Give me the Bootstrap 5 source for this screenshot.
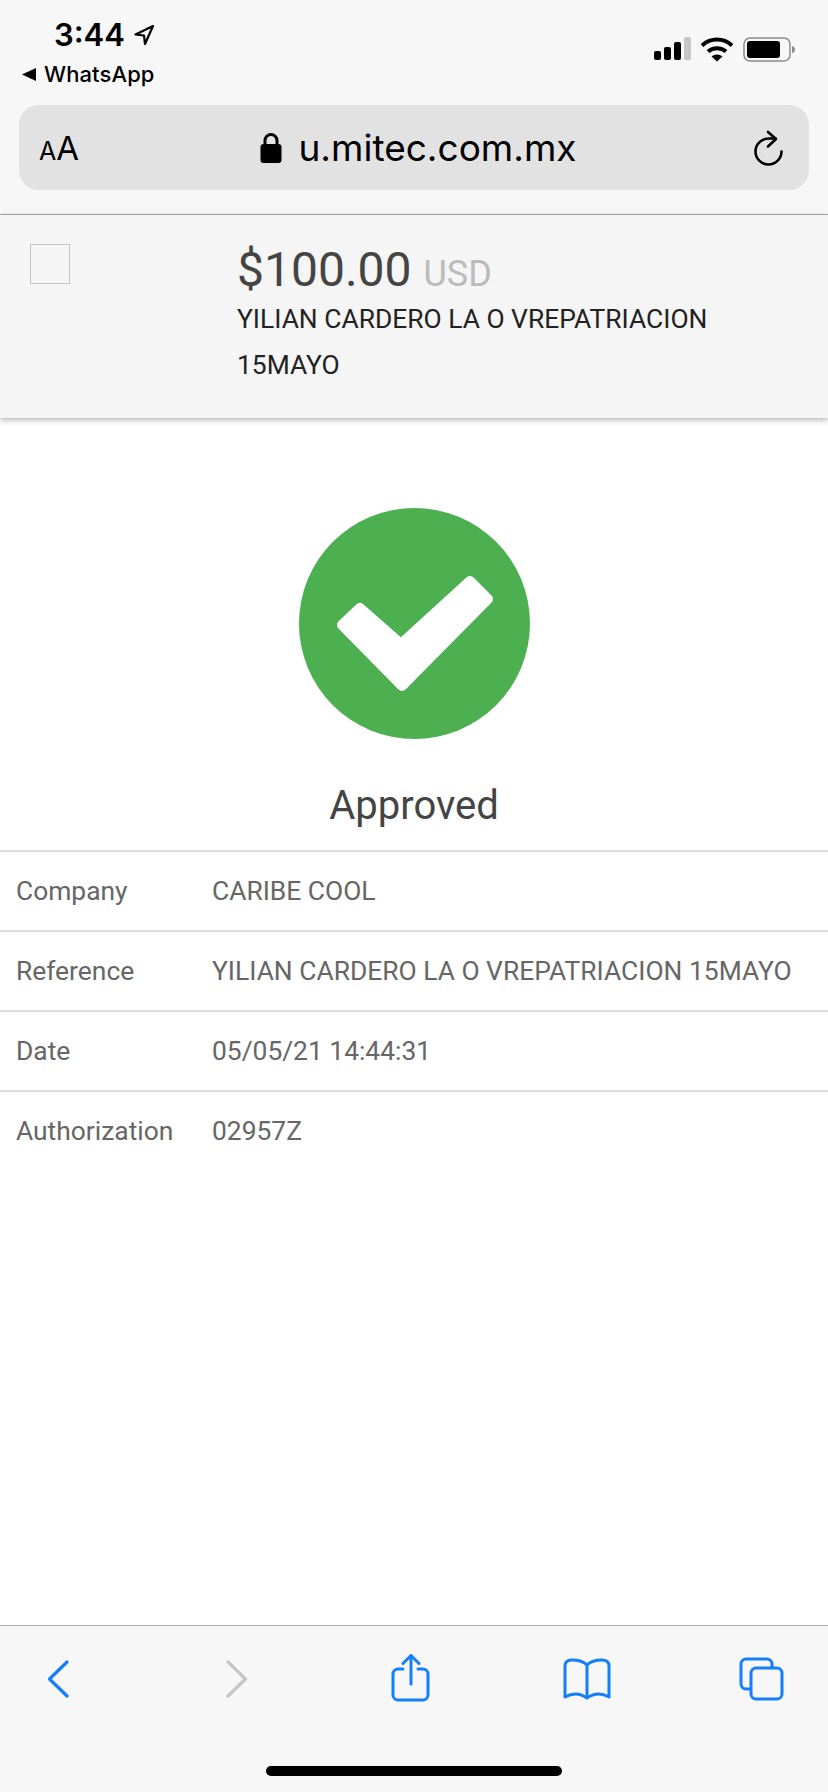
<!DOCTYPE html>
<html lang="en">
<head>
    <meta charset="UTF-8">
    <meta name="viewport" content="width=device-width, initial-scale=1.0">
    <title>Approved</title>
    <link href="https://cdn.jsdelivr.net/npm/bootstrap@5.3.0/dist/css/bootstrap.min.css" rel="stylesheet">
    <style>
        body {
            background: #fff;
            font-family: Roboto, "Liberation Sans", sans-serif;
            height: 1792px;
            overflow: hidden;
        }
        svg { display: block; flex: none; }

        /* browser chrome */
        .safari-top {
            height: 215px;
            background: #f7f7f7;
            border-bottom: 1px solid #aaa;
            padding: 0 19px;
            font-family: Inter, "Liberation Sans", sans-serif;
            color: #000;
        }
        .status-row { height: 105px; }
        .status-left { padding: 17px 0 0 3px; }
        .clock-line { padding-left: 32px; gap: 8px; height: 36px; }
        .clock { font-size: 31px; font-weight: 600; line-height: 36px; }
        .back-app { gap: 8px; height: 28px; margin-top: 7px; }
        .back-app span { font-size: 22px; line-height: 28px; font-weight: 500; letter-spacing: .1px; }
        .status-icons { padding: 37px 14px 0 0; gap: 10px; }
        .url-box {
            height: 85px;
            background: #e2e2e2;
            border-radius: 20px;
            padding: 0 26px 0 20px;
        }
        .aa-btn { line-height: 1; width: 45px; white-space: nowrap; padding-top: 2px; }
        .aa-small { font-size: 25px; }
        .aa-big { font-size: 33px; }
        .url-text { font-size: 37px; line-height: 46px; gap: 16px; }

        /* payment summary */
        .pay-head {
            height: 203px;
            background: #f5f5f5;
            box-shadow: 0 2px 6px rgba(0,0,0,.3);
            padding: 29px 0 0 30px;
            position: relative;
        }
        .logo-box { width: 40px; height: 40px; border: 1px solid #c4c4c4; }
        .pay-info { margin: 4px 0 0 167px; width: 500px; }
        .amount { font-size: 48px; line-height: 44px; color: #444; }
        .currency { font-size: 36px; color: #bbb; }
        .pay-ref { font-size: 26.4px; line-height: 46px; color: #222; }

        /* result */
        .result-box { padding-top: 90px; }
        .result-title { font-size: 40px; line-height: 48px; color: #444; margin: 43px 0 20px; }
        .detail-row {
            height: 80px;
            border-top: 2px solid #ddd;
            padding: 2px 0 0 16px;
            font-size: 26.4px;
            color: #666;
        }
        .detail-label { width: 196px; }

        /* bottom toolbar */
        .safari-bottom {
            position: absolute;
            left: 0;
            right: 0;
            bottom: 0;
            height: 167px;
            background: #f7f7f7;
            border-top: 1px solid #aaa;
        }
        .tool-grid {
            display: grid;
            grid-template-columns: 179px 174px 176px 174px 60px;
            padding: 28px 0 0 28px;
            height: 50px;
            box-sizing: content-box;
        }
        .tool-item { width: 60px; height: 50px; }
        .home-bar {
            position: absolute;
            left: 266px;
            bottom: 16px;
            width: 296px;
            height: 10px;
            background: #000;
            border-radius: 5px;
        }
    </style>
</head>
<body>
    <div class="safari-top">
        <div class="status-row d-flex justify-content-between">
            <div class="status-left">
                <div class="clock-line d-flex align-items-center">
                    <span class="clock">3:44</span>
                    <svg width="22" height="22" viewBox="0 0 22 22"><path d="M20 2 2.500 10.500 11 11.500 12 20Z" fill="none" stroke="#000" stroke-width="2.200" stroke-linejoin="round"/></svg>
                </div>
                <div class="back-app d-flex align-items-center">
                    <svg width="14" height="13" viewBox="0 0 14 13"><path d="M14 0V13L0 6.500Z" fill="#000"/></svg>
                    <span>WhatsApp</span>
                </div>
            </div>
            <div class="status-icons d-flex align-items-start">
                <svg width="37" height="24" viewBox="0 0 37 24">
                    <rect x="0" y="14" width="7" height="9" rx="2" fill="#000"/>
                    <rect x="10" y="10" width="7" height="13" rx="2" fill="#000"/>
                    <rect x="20" y="5" width="7" height="18" rx="2" fill="#000"/>
                    <rect x="30" y="0" width="7" height="23" rx="1.500" fill="#c6c6c6"/>
                </svg>
                <svg width="32" height="25" viewBox="0 0 32 25">
                    <path d="M1 8.500C9.500.5 22.500.5 31 8.500" fill="none" stroke="#000" stroke-width="4"/>
                    <path d="M7 14.500C12 10 20 10 25 14.500" fill="none" stroke="#000" stroke-width="4"/>
                    <path d="M16 24.500 10.500 19.500C13.500 16.800 18.500 16.800 21.500 19.500Z" fill="#000"/>
                </svg>
                <svg width="52" height="25" viewBox="0 0 52 25">
                    <rect x="1" y="1" width="46" height="23" rx="6" fill="none" stroke="#8a8a8a" stroke-width="1.500"/>
                    <rect x="4" y="4" width="33" height="17" rx="3" fill="#000"/>
                    <path d="M49 9c2 .5 3 2 3 3.500s-1 3-3 3.500Z" fill="#8a8a8a"/>
                </svg>
            </div>
        </div>
        <div class="url-box d-flex align-items-center justify-content-between">
            <div class="aa-btn"><span class="aa-small">A</span><span class="aa-big">A</span></div>
            <div class="url-text d-flex align-items-center">
                <svg width="22" height="31" viewBox="0 0 22 31">
                    <path d="M5 13V8.500a6 6 0 0 1 12 0V13" fill="none" stroke="#000" stroke-width="3"/>
                    <rect x="0.500" y="12" width="21" height="19" rx="3" fill="#000"/>
                </svg>
                <span>u.mitec.com.mx</span>
            </div>
            <svg width="30" height="37" viewBox="0 0 30 37">
                <path d="M22.500 9.500H15.500A13 13 0 1 0 28.500 22.500" fill="none" stroke="#000" stroke-width="2.600" stroke-linecap="round"/>
                <path d="M15 3 23 10 15 17.500" fill="none" stroke="#000" stroke-width="2.600" stroke-linecap="round" stroke-linejoin="round"/>
            </svg>
        </div>
    </div>

    <div class="pay-head d-flex align-items-start">
        <div class="logo-box"></div>
        <div class="pay-info">
            <div class="amount">$100.00 <span class="currency">USD</span></div>
            <div class="pay-ref">YILIAN CARDERO LA O VREPATRIACION 15MAYO</div>
        </div>
    </div>

    <div class="result-box text-center">
        <svg class="mx-auto" width="231" height="231" viewBox="0 0 231 231">
            <circle cx="115.500" cy="115.500" r="115.500" fill="#4caf50"/>
            <path d="M171 73 189 91 103 178 43 117 61 100 102 136Z" fill="#fff" stroke="#fff" stroke-width="10" stroke-linejoin="round"/>
        </svg>
        <div class="result-title">Approved</div>
    </div>

    <div class="detail-list">
        <div class="detail-row d-flex align-items-center"><div class="detail-label">Company</div><div>CARIBE COOL</div></div>
        <div class="detail-row d-flex align-items-center"><div class="detail-label">Reference</div><div>YILIAN CARDERO LA O VREPATRIACION 15MAYO</div></div>
        <div class="detail-row d-flex align-items-center"><div class="detail-label">Date</div><div>05/05/21 14:44:31</div></div>
        <div class="detail-row d-flex align-items-center"><div class="detail-label">Authorization</div><div>02957Z</div></div>
    </div>

    <div class="safari-bottom">
        <div class="tool-grid">
            <div class="tool-item d-flex justify-content-center align-items-center">
                <svg width="22" height="38" viewBox="0 0 22 38"><path d="M20 2 2.500 19 20 36" fill="none" stroke="#147efb" stroke-width="3.200" stroke-linecap="round" stroke-linejoin="round"/></svg>
            </div>
            <div class="tool-item d-flex justify-content-center align-items-center">
                <svg width="22" height="38" viewBox="0 0 22 38"><path d="M2 2 19.500 19 2 36" fill="none" stroke="#c6c6c6" stroke-width="3.200" stroke-linecap="round" stroke-linejoin="round"/></svg>
            </div>
            <div class="tool-item d-flex justify-content-center align-items-center">
                <svg width="40" height="50" viewBox="0 0 40 50" fill="none" stroke="#147efb" stroke-width="3" stroke-linecap="round" stroke-linejoin="round">
                    <path d="M12 15H7a5 5 0 0 0-5 5V41a5 5 0 0 0 5 5H32a5 5 0 0 0 5-5V20a5 5 0 0 0-5-5H27"/>
                    <path d="M20 2V30"/>
                    <path d="M12 9.500 20 1.500 28 9.500"/>
                </svg>
            </div>
            <div class="tool-item d-flex justify-content-center align-items-center">
                <svg width="48" height="42" viewBox="0 0 48 42" fill="none" stroke="#147efb" stroke-width="3" stroke-linecap="round" stroke-linejoin="round">
                    <path d="M24 7C20 3 15 2 9 2 4.500 2 2 4 2 8V39C9 35 17 35 24 40 31 35 39 35 46 39V8C46 4 43.500 2 39 2 33 2 28 3 24 7V40"/>
                </svg>
            </div>
            <div class="tool-item d-flex justify-content-center align-items-center">
                <svg width="45" height="44" viewBox="0 0 45 44" fill="none" stroke="#147efb" stroke-width="3" stroke-linejoin="round">
                    <path d="M33 10V7a5 5 0 0 0-5-5H7a5 5 0 0 0-5 5V27a5 5 0 0 0 5 5h4"/>
                    <rect x="12" y="11" width="31" height="31" rx="5"/>
                </svg>
            </div>
        </div>
        <div class="home-bar"></div>
    </div>
</body>
</html>
